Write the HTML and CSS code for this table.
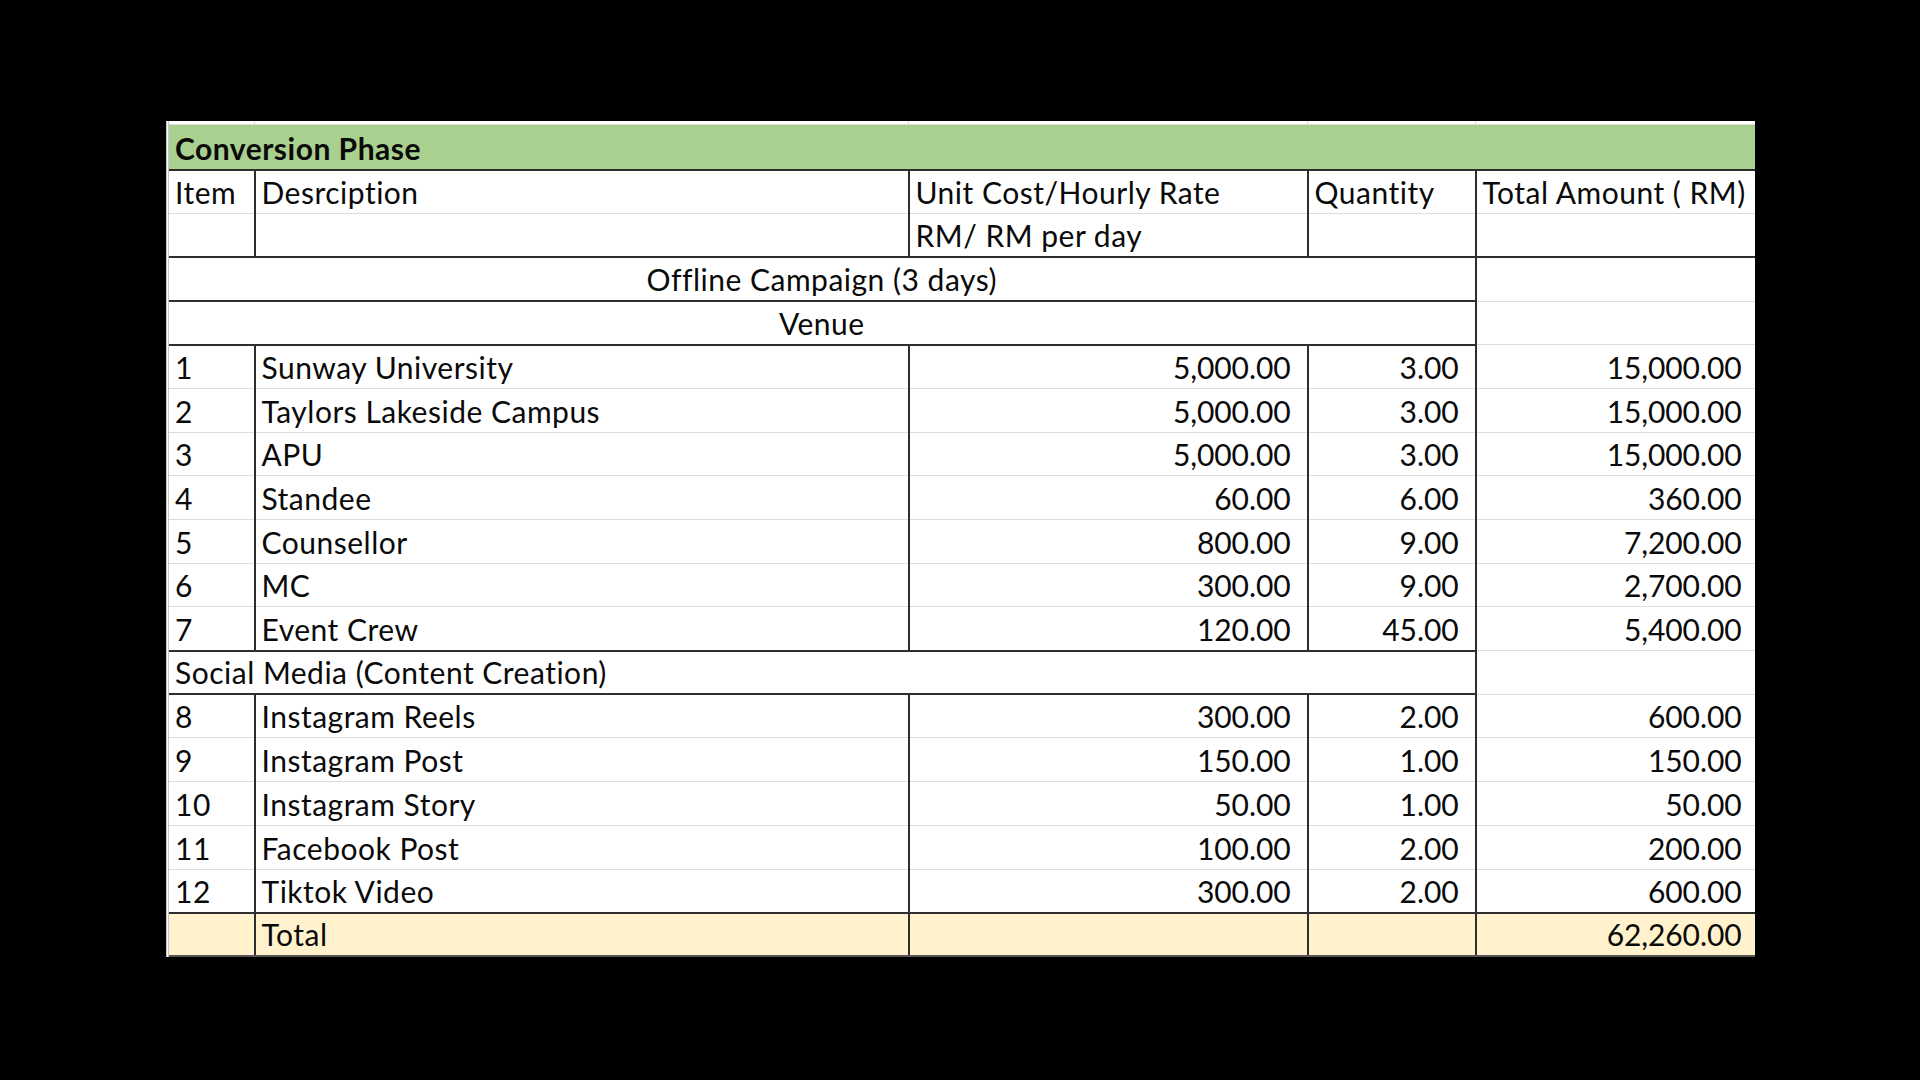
FILE: index.html
```html
<!DOCTYPE html>
<html lang="en">
<head>
<meta charset="utf-8">
<title>Conversion Phase</title>
<link rel="stylesheet" href="styles.css">
</head>
<body>
<div class="sheet">
<table class="budget">
<colgroup>
<col class="c-item"><col class="c-desc"><col class="c-unit"><col class="c-qty"><col class="c-total">
</colgroup>
<tbody>
<tr class="strip"><td></td><td></td><td></td><td></td><td class="last"></td></tr>
<tr class="phase"><td colspan="5">Conversion Phase</td></tr>
<tr class="head"><td class="vd">Item</td><td class="vd">Desrciption</td><td class="vd">Unit Cost/Hourly Rate</td><td class="vd">Quantity</td><td>Total Amount ( RM)</td></tr>
<tr class="head dark-b"><td class="vd"></td><td class="vd"></td><td class="vd">RM/ RM per day</td><td class="vd"></td><td></td></tr>
<tr class="group"><td colspan="4" class="vd mid db">Offline Campaign (3 days)</td><td></td></tr>
<tr class="group"><td colspan="4" class="vd mid db">Venue</td><td></td></tr>
<tr class="row"><td class="vd">1</td><td class="vd">Sunway University</td><td class="vd num">5,000.00</td><td class="vd num">3.00</td><td class="num tot">15,000.00</td></tr>
<tr class="row"><td class="vd">2</td><td class="vd">Taylors Lakeside Campus</td><td class="vd num">5,000.00</td><td class="vd num">3.00</td><td class="num tot">15,000.00</td></tr>
<tr class="row"><td class="vd">3</td><td class="vd">APU</td><td class="vd num">5,000.00</td><td class="vd num">3.00</td><td class="num tot">15,000.00</td></tr>
<tr class="row"><td class="vd">4</td><td class="vd">Standee</td><td class="vd num">60.00</td><td class="vd num">6.00</td><td class="num tot">360.00</td></tr>
<tr class="row"><td class="vd">5</td><td class="vd">Counsellor</td><td class="vd num">800.00</td><td class="vd num">9.00</td><td class="num tot">7,200.00</td></tr>
<tr class="row"><td class="vd">6</td><td class="vd">MC</td><td class="vd num">300.00</td><td class="vd num">9.00</td><td class="num tot">2,700.00</td></tr>
<tr class="row"><td class="vd db">7</td><td class="vd db">Event Crew</td><td class="vd num db">120.00</td><td class="vd num db">45.00</td><td class="num tot">5,400.00</td></tr>
<tr class="group"><td colspan="4" class="vd db">Social Media (Content Creation)</td><td></td></tr>
<tr class="row"><td class="vd">8</td><td class="vd">Instagram Reels</td><td class="vd num">300.00</td><td class="vd num">2.00</td><td class="num tot">600.00</td></tr>
<tr class="row"><td class="vd">9</td><td class="vd">Instagram Post</td><td class="vd num">150.00</td><td class="vd num">1.00</td><td class="num tot">150.00</td></tr>
<tr class="row"><td class="vd">10</td><td class="vd">Instagram Story</td><td class="vd num">50.00</td><td class="vd num">1.00</td><td class="num tot">50.00</td></tr>
<tr class="row"><td class="vd">11</td><td class="vd">Facebook Post</td><td class="vd num">100.00</td><td class="vd num">2.00</td><td class="num tot">200.00</td></tr>
<tr class="row dark-b"><td class="vd">12</td><td class="vd">Tiktok Video</td><td class="vd num">300.00</td><td class="vd num">2.00</td><td class="num tot">600.00</td></tr>
<tr class="total"><td class="vd"></td><td class="vd">Total</td><td class="vd"></td><td class="vd"></td><td class="num tot">62,260.00</td></tr>
</tbody>
</table>
</div>
</body>
</html>
```
FILE: styles.css
```css
html, body {
  margin: 0;
  padding: 0;
  background: #000;
}
.sheet {
  padding: 121px 0 0 166px;
}
.budget {
  border-collapse: collapse;
  table-layout: fixed;
  width: 1587px;
  background: #fff;
  font-family: Lato, "Open Sans", sans-serif;
  font-size: 30px;
  color: #0a0a0a;
  border-left: 3px double #c4c4c4;
}
.c-item { width: 87px; }
.c-desc { width: 654px; }
.c-unit { width: 399px; }
.c-qty { width: 168px; }
.c-total { width: 279px; }

.budget td {
  padding: 0 6px 3px 6px;
  line-height: 35px;
  height: 43.7px;
  vertical-align: bottom;
  white-space: nowrap;
  overflow: hidden;
  letter-spacing: 0.5px;
  border-bottom: 1px solid #dcdcdc;
  box-sizing: border-box;
}
.budget tr > td:first-child { padding-left: 6px; }

.strip td {
  height: 3px;
  padding: 0;
  line-height: 0;
  border-bottom: 1px solid #dcdcdc;
  border-right: 1px solid #dcdcdc;
}
.strip td.last { border-right: none; }

.phase td {
  background: #a9d08e;
  font-weight: 700;
  height: 46px;
  border-bottom: 2px solid #2e2e2e;
}

.budget td.vd { border-right: 2px solid #2e2e2e; }
.budget td.db,
.dark-b td { border-bottom: 2px solid #2e2e2e; }

.budget td.mid { text-align: center; }
.budget td.num { text-align: right; padding-right: 16px; letter-spacing: -0.1px; }
.budget td.tot { padding-right: 13px; }

.total td {
  background: #fff2cc;
  border-bottom: 2px solid #555;
}
```
